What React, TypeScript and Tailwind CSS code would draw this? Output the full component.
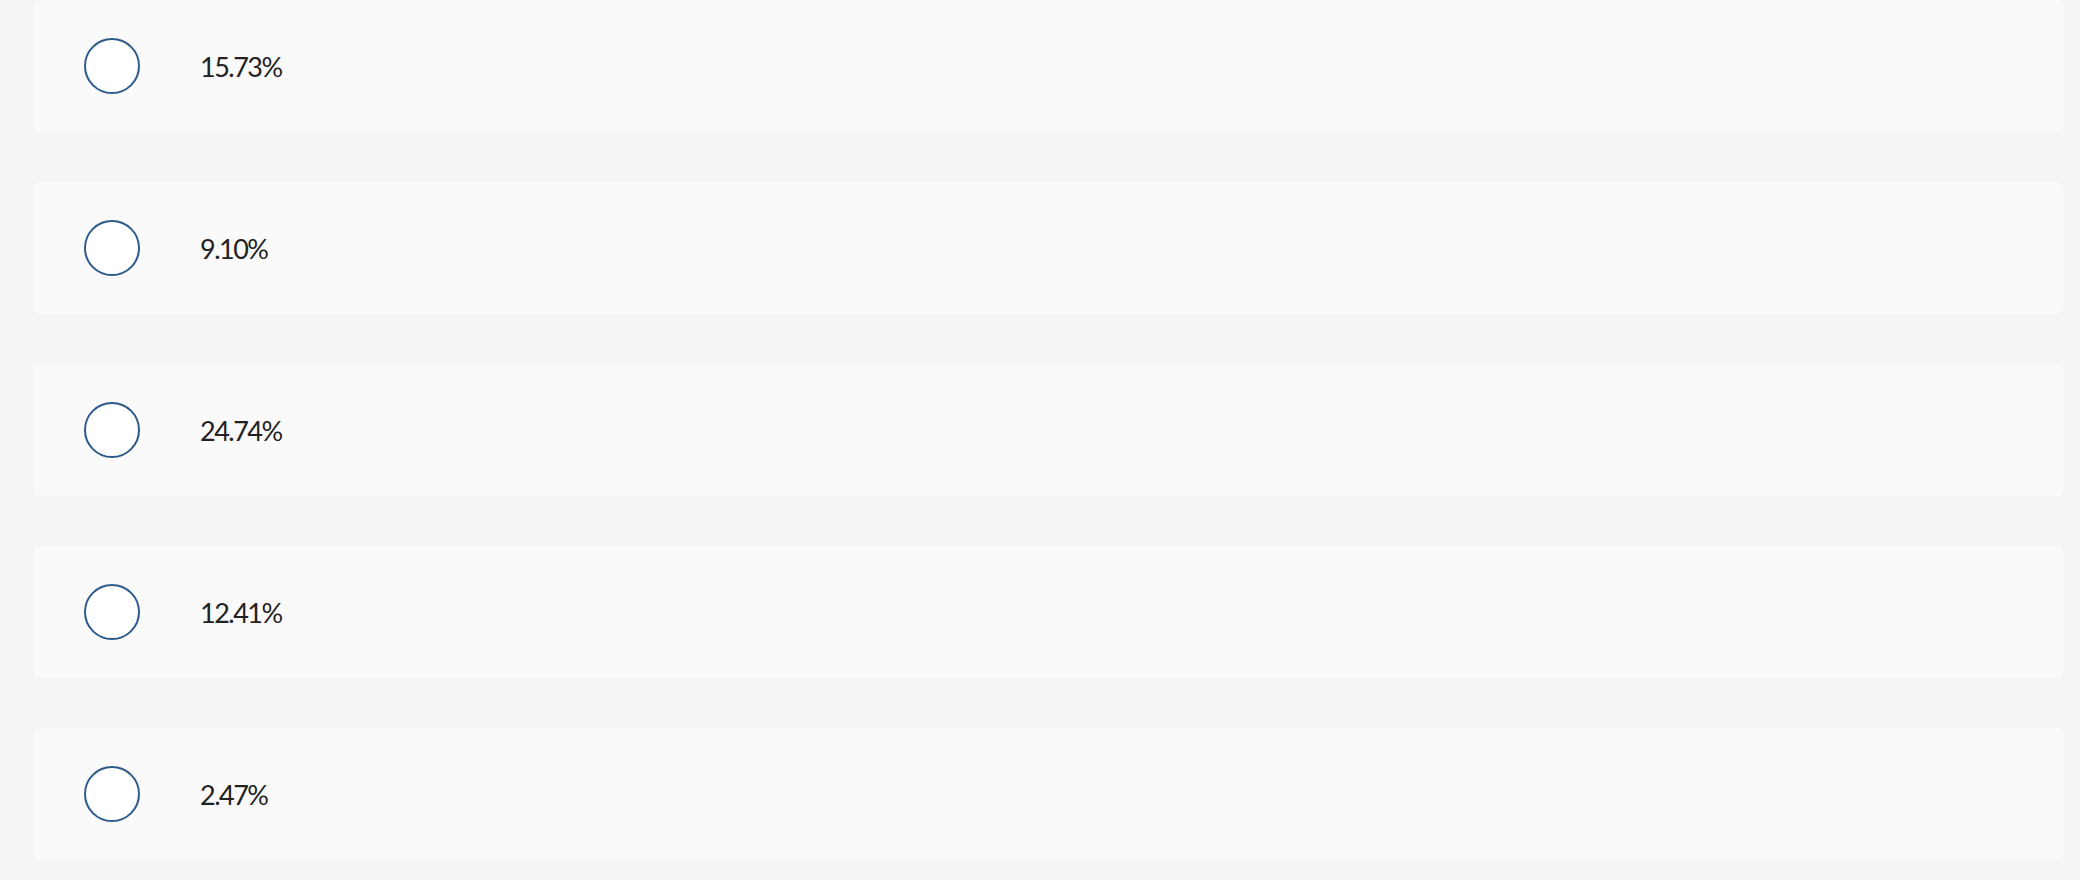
const options = ['15.73%', '9.10%', '24.74%', '12.41%', '2.47%'];

const Option = ({ label }: { label: string }) => {
  return (
    <div className="h-[132px] bg-[#fafafa] rounded-md flex items-center pl-[50px]">
      <span className="w-[56px] h-[56px] rounded-full border-2 border-[#2d5a8c] bg-white shrink-0" />
      <span className="ml-[60px] text-[27px] leading-none text-[#222] tracking-[-1.5px] font-['Lato',sans-serif]">
        {label}
      </span>
    </div>
  );
};

export default function App() {
  return (
    <div className="w-[2080px] h-[880px] bg-[#f5f5f5] pl-[34px] pr-[17px] flex flex-col gap-[50px] overflow-hidden">
      {options.map((o) => (
        <Option key={o} label={o} />
      ))}
    </div>
  );
}
